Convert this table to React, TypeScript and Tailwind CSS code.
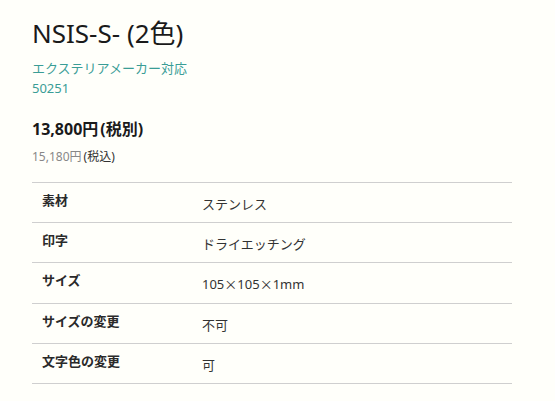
import React from "react";

const specs = [
  { label: "素材", value: "ステンレス" },
  { label: "印字", value: "ドライエッチング" },
  { label: "サイズ", value: "105×105×1mm" },
  { label: "サイズの変更", value: "不可" },
  { label: "文字色の変更", value: "可" },
];

const cjk = { fontFamily: '"Noto Sans CJK JP", sans-serif' };

export default function App() {
  return (
    <div
      className="min-h-[401px] bg-[#fffffa] px-8 pt-[14px] text-[#222]"
      style={{ fontFamily: '"Noto Sans", "Noto Sans CJK JP", sans-serif' }}
    >
      <h1 className="text-[26px] leading-[38px] font-normal text-[#1a1a1a]">NSIS-S- (2色)</h1>
      <div className="mt-[6px] text-[13px] leading-[20px] text-[#3a9d96]">
        <p>エクステリアメーカー対応</p>
        <p>50251</p>
      </div>
      <p className="mt-[20px] text-[16px] leading-[22px] font-bold text-[#1a1a1a]">
        13,800円<span className="ml-[2px]">(税別)</span>
      </p>
      <p className="mt-[8px] text-[12px] leading-[18px]">
        <span className="text-[#888]">15,180円</span>
        <span className="ml-[2px] text-[#333]">(税込)</span>
      </p>
      <table className="mt-[16px] w-[480px] border-collapse">
        <tbody>
          {specs.map((s) => (
            <tr key={s.label} className="border-y border-[#cfcfcf]">
              <th className="h-[40.2px] w-[170px] pl-[10px] pt-[8px] align-top text-left text-[13px] leading-[18px] font-bold text-[#2a2a2a]">
                {s.label}
              </th>
              <td className="h-[40.2px] pt-[12px] align-top text-[13px] leading-[18px] text-[#333]">
                {s.value.includes("×")
                  ? s.value.split("×").map((part, i) => (
                      <React.Fragment key={i}>
                        {i > 0 && <span style={cjk}>×</span>}
                        {part}
                      </React.Fragment>
                    ))
                  : s.value}
              </td>
            </tr>
          ))}
        </tbody>
      </table>
    </div>
  );
}
